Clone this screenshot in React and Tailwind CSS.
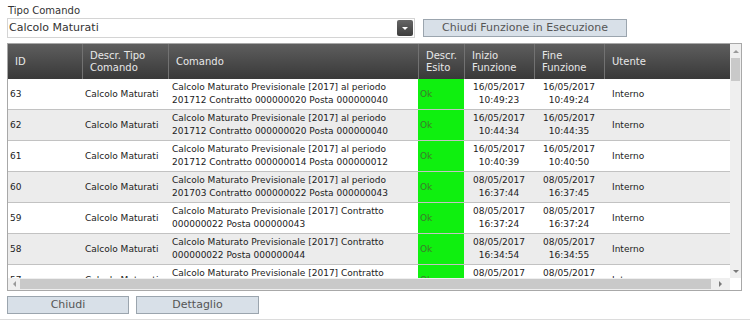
import React from 'react';

const cols = [
  { key: 'id', label: ['ID'], w: 'w-[74px]' },
  { key: 'tipo', label: ['Descr. Tipo', 'Comando'], w: 'w-[86px]' },
  { key: 'cmd', label: ['Comando'], w: 'w-[250px]' },
  { key: 'esito', label: ['Descr.', 'Esito'], w: 'w-[46px]' },
  { key: 'inizio', label: ['Inizio', 'Funzione'], w: 'w-[70px]' },
  { key: 'fine', label: ['Fine', 'Funzione'], w: 'w-[70px]' },
  { key: 'utente', label: ['Utente'], w: 'w-[126px]' },
];

const P = 'Calcolo Maturato Previsionale [2017] al periodo';
const C = 'Calcolo Maturato Previsionale [2017] Contratto';

const rows = [
  { id: '63', cmd: [P, '201712 Contratto 000000020 Posta 000000040'], ini: ['16/05/2017', '10:49:23'], fin: ['16/05/2017', '10:49:24'] },
  { id: '62', cmd: [P, '201712 Contratto 000000020 Posta 000000040'], ini: ['16/05/2017', '10:44:34'], fin: ['16/05/2017', '10:44:35'] },
  { id: '61', cmd: [P, '201712 Contratto 000000014 Posta 000000012'], ini: ['16/05/2017', '10:40:39'], fin: ['16/05/2017', '10:40:50'] },
  { id: '60', cmd: [P, '201703 Contratto 000000022 Posta 000000043'], ini: ['08/05/2017', '16:37:44'], fin: ['08/05/2017', '16:37:45'] },
  { id: '59', cmd: [C, '000000022 Posta 000000043'], ini: ['08/05/2017', '16:37:24'], fin: ['08/05/2017', '16:37:24'] },
  { id: '58', cmd: [C, '000000022 Posta 000000044'], ini: ['08/05/2017', '16:34:54'], fin: ['08/05/2017', '16:34:55'] },
  { id: '57', cmd: [C, '000000022 Posta 000000045'], ini: ['08/05/2017', '16:31:12'], fin: ['08/05/2017', '16:31:13'] },
];

function Lines({ lines }) {
  return lines.map((l, i) => <div key={i}>{l}</div>);
}

function Tri({ dir }) {
  // piccole frecce delle scrollbar
  const cls = {
    up: 'border-x-[3px] border-x-transparent border-b-[3px] border-b-[#9a9a9a]',
    down: 'border-x-[3px] border-x-transparent border-t-[3px] border-t-[#7a7a7a]',
    left: 'border-y-[3px] border-y-transparent border-r-[3px] border-r-[#9a9a9a]',
    right: 'border-y-[3px] border-y-transparent border-l-[3px] border-l-[#7a7a7a]',
  }[dir];
  return <div className={`w-0 h-0 ${cls}`} />;
}

export default function App() {
  return (
    <div className="w-[750px] h-[322px] bg-white overflow-hidden font-['DejaVu_Sans',Verdana,sans-serif] text-[#222]">
      <div className="px-[7px] pt-[5px]">
        <div className="text-[10px] leading-[12px] pl-px text-[#333]">Tipo Comando</div>

        {/* Filtro */}
        <div className="flex items-center gap-[8px] mt-px">
          <div className="w-[408px] h-[20px] border border-[#d4d4d4] flex items-center justify-between pr-px">
            <span className="text-[11px] leading-[14px] pl-px text-[#333]">Calcolo Maturati</span>
            <div className="w-[16px] h-[16px] rounded-[2px] bg-linear-to-b from-[#666] to-[#3d3d3d] flex items-center justify-center">
              <div className="w-0 h-0 border-x-[3px] border-x-transparent border-t-[3px] border-t-white" />
            </div>
          </div>
          <button className="w-[204px] h-[18px] bg-[#d8e0e8] border border-[#9ba5ae] text-[11px] leading-[14px] text-[#555]">
            Chiudi Funzione in Esecuzione
          </button>
        </div>

        {/* Griglia */}
        <div className="mt-[5px] w-[735px] h-[248px] border border-[#a8a8a8] flex">
          <div className="w-[722px] flex flex-col">
            <div className="h-[35px] flex bg-linear-to-b from-[#5e5e5e] to-[#393939] text-[#e8e8e8] text-[10px] leading-[12px]">
              {cols.map((c, i) => (
                <div
                  key={c.key}
                  className={`${c.w} shrink-0 flex flex-col justify-center pl-[7px] ${i > 0 ? 'border-l border-[#727272]' : ''}`}
                >
                  <Lines lines={c.label} />
                </div>
              ))}
            </div>

            <div className="h-[199px] overflow-hidden text-[9px] leading-[13px]">
              {rows.map((r, i) => (
                <div
                  key={r.id}
                  className={`h-[31px] flex border-b border-[#c2c2c2] ${i % 2 ? 'bg-[#ececec]' : 'bg-white'}`}
                >
                  <div className="w-[74px] shrink-0 flex items-center pl-[2px]">{r.id}</div>
                  <div className="w-[86px] shrink-0 flex items-center pl-[3px]">Calcolo Maturati</div>
                  <div className="w-[250px] shrink-0 flex flex-col justify-center pl-[4px]">
                    <Lines lines={r.cmd} />
                  </div>
                  <div className="w-[46px] shrink-0 flex items-center pl-[2px] bg-[#0ff00f] text-[#3c7a2c]">Ok</div>
                  <div className="w-[70px] shrink-0 flex flex-col justify-center items-center">
                    <Lines lines={r.ini} />
                  </div>
                  <div className="w-[70px] shrink-0 flex flex-col justify-center items-center">
                    <Lines lines={r.fin} />
                  </div>
                  <div className="w-[126px] shrink-0 flex items-center pl-[8px]">Interno</div>
                </div>
              ))}
            </div>

            {/* scrollbar orizzontale */}
            <div className="h-[12px] bg-[#efefef] flex items-center">
              <div className="w-[12px] flex justify-center"><Tri dir="left" /></div>
              <div className="w-[691px] h-[10px] bg-[#c9c9c9]" />
              <div className="flex-1 flex justify-center"><Tri dir="right" /></div>
            </div>
          </div>

          {/* scrollbar verticale */}
          <div className="w-[11px] flex flex-col">
            <div className="h-[234px] bg-[#efefef] flex flex-col items-center">
              <div className="h-[14px] flex items-center"><Tri dir="up" /></div>
              <div className="w-[9px] h-[23px] bg-[#c9c9c9]" />
              <div className="flex-1" />
              <div className="h-[14px] flex items-center"><Tri dir="down" /></div>
            </div>
            <div className="flex-1 bg-white" />
          </div>
        </div>

        {/* Azioni */}
        <div className="flex gap-[7px] mt-[5px]">
          <button className="w-[122px] h-[18px] bg-[#d8e0e8] border border-[#9ba5ae] text-[11px] leading-[14px] text-[#555]">
            Chiudi
          </button>
          <button className="w-[123px] h-[18px] bg-[#d8e0e8] border border-[#9ba5ae] text-[11px] leading-[14px] text-[#555]">
            Dettaglio
          </button>
        </div>
      </div>
      <div className="mt-[5px] h-px bg-[#dcdcdc]" />
    </div>
  );
}
